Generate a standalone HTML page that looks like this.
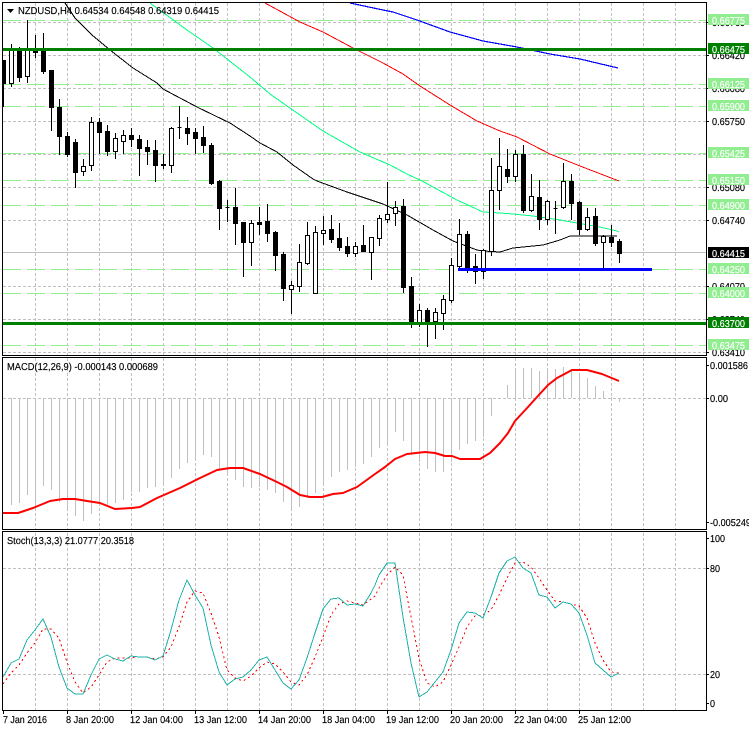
<!DOCTYPE html>
<html>
<head>
<meta charset="utf-8">
<title>NZDUSD,H4</title>
<style>
html,body{margin:0;padding:0;background:#fff;width:749px;height:731px;overflow:hidden}
svg{display:block}
text{font-family:"Liberation Sans",sans-serif;font-size:10px;fill:#000;stroke:#000;stroke-width:.15;text-rendering:geometricPrecision}
.w,.k{fill:#fff;stroke:#fff}
</style>
</head>
<body>
<svg xmlns="http://www.w3.org/2000/svg" width="749" height="731" viewBox="0 0 749 731">
<rect width="749" height="731" fill="#fff"/>

<!-- vertical grid -->
<path shape-rendering="crispEdges" fill="none" stroke="#c0c0c0" stroke-dasharray="3 2" d="M35.5 3V710M67.5 3V710M99.5 3V710M131.5 3V710M163.5 3V710M195.5 3V710M227.5 3V710M259.5 3V710M291.5 3V710M323.5 3V710M355.5 3V710M387.5 3V710M419.5 3V710M451.5 3V710M483.5 3V710M515.5 3V710M547.5 3V710M579.5 3V710M611.5 3V710M643.5 3V710M675.5 3V710"/>
<!-- horizontal grid -->
<path shape-rendering="crispEdges" fill="none" stroke="#c0c0c0" stroke-dasharray="3 2" d="M3 22.5H706M3 55.5H706M3 88.5H706M3 121.5H706M3 154.5H706M3 187.5H706M3 220.5H706M3 286.5H706M3 319.5H706M3 352.5H706M3 398.5H706M3 568.5H706M3 674.5H706"/>
<path shape-rendering="crispEdges" stroke="#c0c0c0" d="M3 252.5H706"/>
<!-- light green levels -->
<path shape-rendering="crispEdges" fill="none" stroke="#90ee90" stroke-dasharray="18 6" d="M3 20.5H706M3 84.5H706M3 106.5H706M3 153.5H706M3 180.5H706M3 205.5H706M3 269.5H706M3 293.5H706M3 345.5H706"/>

<!-- moving averages -->
<g fill="none" shape-rendering="crispEdges">
<polyline stroke="#000" points="65,3 75,18 92,35 110,50 133,68 157,83 163,89 197,107 230,123 250,136 260,143 277,152 293,165 313,179 317,181 347,192 383,204 407,215 433,230 453,241 477,250 483,251 500,252 513,248 533,246 543,245 560,240 570,236 617,236"/>
<polyline stroke="#00ff7f" points="150,3 187,30 213,48 250,77 270,94 287,106 323,131 360,152 390,165 407,174 422,181 457,200 483,212 500,213 513,214 533,216 560,220 577,223 600,227 617,231 619,232"/>
<polyline stroke="#ff0000" stroke-width="1" points="265,3 300,22 323,32 353,48 383,63 403,74 420,86 450,105 477,121 500,131 517,137 550,154 580,166 619,181"/>
<polyline stroke="#0000ff" stroke-width="1.2" points="350,3 383,10 393,12 417,20 450,32 483,41 500,44 517,47 550,54 580,59 618,68"/>
</g>

<!-- wicks -->
<path shape-rendering="crispEdges" fill="none" stroke="#000" d="M3.5 84V107M11.5 44V87M19.5 47V82M27.5 20V83M35.5 35V58M43.5 33V74M51.5 70V131M59.5 99V155M67.5 132V157M75.5 139V188M83.5 159V176M91.5 117V171M99.5 118V154M107.5 125V156M115.5 133V159M123.5 130V154M131.5 128V147M139.5 135V176M147.5 140V165M155.5 140V182M163.5 154V169M171.5 127V173M179.5 106V139M187.5 117V145M195.5 128V154M203.5 126V153M211.5 143V185M219.5 180V230M227.5 200V222M235.5 188V245M243.5 222V277M251.5 220V266M259.5 207V235M267.5 204V242M275.5 231V271M283.5 252V301M291.5 281V314M299.5 244V292M307.5 222V265M315.5 226V293M323.5 216V245M331.5 215V243M339.5 223V251M347.5 237V257M355.5 242V257M363.5 225V252M371.5 237V280M379.5 215V246M387.5 182V223M395.5 201V226M403.5 199V293M411.5 277V328M419.5 304V327M427.5 308V347M435.5 308V339M443.5 295V330M451.5 258V303M459.5 219V268M467.5 231V273M475.5 254V284M483.5 249V279M491.5 158V256M499.5 138V210M507.5 149V183M515.5 150V182M523.5 145V213M531.5 174V212M539.5 180V230M547.5 200V225M555.5 201V234M563.5 163V209M571.5 174V220M579.5 201V235M587.5 208V231M595.5 208V246M603.5 235V270M611.5 225V247M619.5 239V263"/>
<!-- left clipped candle -->
<rect x="3" y="60" width="3" height="24" fill="#000" shape-rendering="crispEdges"/>
<!-- black bodies -->
<path shape-rendering="crispEdges" fill="#000" stroke="#000" d="M17.5 50.5h4v27h-4zM33.5 48.5h4v4h-4zM41.5 51.5h4v20h-4zM49.5 70.5h4v37h-4zM57.5 107.5h4v29h-4zM65.5 136.5h4v18h-4zM73.5 142.5h4v30h-4zM97.5 122.5h4v10h-4zM105.5 131.5h4v20h-4zM129.5 135.5h4v4h-4zM137.5 139.5h4v9h-4zM145.5 147.5h4v4h-4zM153.5 150.5h4v15h-4zM161.5 164.5h4v1h-4zM177.5 127.5h4v0h-4zM185.5 128.5h4v5h-4zM193.5 132.5h4v6h-4zM201.5 137.5h4v8h-4zM209.5 145.5h4v38h-4zM217.5 181.5h4v27h-4zM225.5 207.5h4v0h-4zM233.5 207.5h4v16h-4zM241.5 222.5h4v20h-4zM257.5 222.5h4v2h-4zM265.5 221.5h4v12h-4zM273.5 232.5h4v23h-4zM281.5 254.5h4v34h-4zM329.5 229.5h4v10h-4zM337.5 238.5h4v9h-4zM345.5 246.5h4v7h-4zM361.5 245.5h4v6h-4zM401.5 206.5h4v81h-4zM409.5 286.5h4v37h-4zM425.5 310.5h4v11h-4zM465.5 234.5h4v33h-4zM473.5 266.5h4v5h-4zM505.5 169.5h4v7h-4zM521.5 154.5h4v56h-4zM537.5 197.5h4v22h-4zM553.5 208.5h4v0h-4zM569.5 181.5h4v22h-4zM577.5 202.5h4v27h-4zM593.5 216.5h4v27h-4zM609.5 237.5h4v5h-4zM617.5 241.5h4v12h-4z"/>
<!-- white bodies -->
<path shape-rendering="crispEdges" fill="#fff" stroke="#000" d="M9.5 50.5h4v33h-4zM25.5 49.5h4v27h-4zM81.5 166.5h4v5h-4zM89.5 122.5h4v43h-4zM113.5 138.5h4v13h-4zM121.5 135.5h4v6h-4zM169.5 128.5h4v37h-4zM249.5 223.5h4v19h-4zM289.5 285.5h4v4h-4zM297.5 262.5h4v24h-4zM305.5 235.5h4v28h-4zM313.5 232.5h4v61h-4zM321.5 230.5h4v3h-4zM353.5 246.5h4v7h-4zM369.5 237.5h4v15h-4zM377.5 218.5h4v20h-4zM385.5 214.5h4v5h-4zM393.5 207.5h4v6h-4zM417.5 310.5h4v13h-4zM433.5 312.5h4v9h-4zM441.5 299.5h4v14h-4zM449.5 265.5h4v35h-4zM457.5 234.5h4v32h-4zM481.5 250.5h4v21h-4zM489.5 190.5h4v61h-4zM497.5 166.5h4v24h-4zM513.5 154.5h4v22h-4zM529.5 196.5h4v14h-4zM545.5 201.5h4v18h-4zM561.5 181.5h4v26h-4zM585.5 217.5h4v12h-4zM601.5 236.5h4v6h-4z"/>

<!-- solid levels -->
<g shape-rendering="crispEdges">
<rect x="3" y="48" width="703" height="3" fill="#008000"/>
<rect x="3" y="322" width="703" height="3" fill="#008000"/>
<rect x="458" y="268" width="194" height="3" fill="#0000ff"/>
</g>

<!-- MACD histogram -->
<path shape-rendering="crispEdges" fill="none" stroke="#c0c0c0" d="M11.5 398V505M19.5 398V503M27.5 398V495M35.5 398V508M43.5 398V486M51.5 398V490M59.5 398V502M67.5 398V508M75.5 398V516M83.5 398V521M91.5 398V514M99.5 398V505M107.5 398V505M115.5 398V503M123.5 398V500M131.5 398V492M139.5 398V492M147.5 398V488M155.5 398V487M163.5 398V483M171.5 398V478M179.5 398V469M187.5 398V463M195.5 398V460M203.5 398V455M211.5 398V457M219.5 398V470M227.5 398V475M235.5 398V480M243.5 398V487M251.5 398V488M259.5 398V487M267.5 398V490M275.5 398V493M283.5 398V502M291.5 398V508M299.5 398V507M307.5 398V498M315.5 398V493M323.5 398V485M331.5 398V477M339.5 398V472M347.5 398V470M355.5 398V467M363.5 398V464M371.5 398V457M379.5 398V448M387.5 398V443M395.5 398V432M403.5 398V441M411.5 398V455M419.5 398V462M427.5 398V469M435.5 398V472M443.5 398V472M451.5 398V462M459.5 398V450M467.5 398V444M475.5 398V441M483.5 398V437M491.5 398V416M507.5 398V385M515.5 398V368M523.5 398V368M531.5 398V368M539.5 398V371M547.5 398V368M555.5 398V369M563.5 398V367M571.5 398V369M579.5 398V374M587.5 398V378M595.5 398V386M603.5 398V391M611.5 398V397M619.5 398V402"/>
<!-- MACD line -->
<polyline fill="none" stroke="#ff0000" stroke-width="2" stroke-linejoin="round" points="3,513 18,513 33,508 50,501 63,499 75,499 87,501 100,503 115,509 132,508 140,507 157,498 180,488 200,478 217,470 230,468 243,468 260,474 277,482 287,487 300,495 310,497 322,497 333,494 343,493 357,487 375,474 385,467 395,459 407,454 425,452 435,453 445,456 452,456 460,459 480,459 490,453 500,443 508,433 515,421 528,407 537,397 548,385 557,378 572,370 587,370 602,374 619,381"/>

<!-- Stochastic -->
<polyline shape-rendering="crispEdges" fill="none" stroke="#ff0000" stroke-dasharray="2 3" points="3,684 11,673 19,665 27,653 35,643 43,629 51,629 59,638 67,662 75,682 83,693 91,687 99,675 107,662 115,658 123,658 131,658 139,657 147,657 155,659 163,657 171,647 179,627 187,602 195,591 203,593 211,613 219,637 227,670 235,678 243,681 251,676 259,668 267,662 275,664 283,672 291,682 299,685 307,675 315,657 323,637 331,615 339,604 347,601 355,603 363,605 371,599 375,596 379,588 387,575 395,567 403,575 411,617 419,658 427,683 435,687 443,682 451,665 459,647 467,627 475,616 483,615 491,610 499,595 507,578 515,563 523,562 531,567 539,578 547,590 555,601 563,602 571,604 579,606 587,618 595,643 603,660 611,672 619,673"/>
<polyline shape-rendering="crispEdges" fill="none" stroke="#20b2aa" points="3,677 11,663 19,659 27,640 35,630 43,619 51,637 59,667 67,688 75,694 83,694 91,675 99,659 107,655 115,659 123,661 131,656 139,657 147,657 155,660 163,656 171,630 179,600 187,580 195,595 203,608 211,645 219,672 227,685 235,679 243,677 251,670 259,660 267,657 275,670 283,683 291,689 299,680 307,658 315,633 323,609 331,599 339,598 347,605 355,604 363,606 371,593 375,585 379,575 387,563 395,563 403,617 411,663 419,697 427,692 435,682 443,672 451,650 459,623 467,612 475,613 483,618 491,597 499,573 507,561 515,557 523,568 531,573 539,595 547,597 555,608 563,602 571,604 579,613 587,635 595,663 603,670 611,677 619,673"/>

<!-- frames -->
<path shape-rendering="crispEdges" fill="none" stroke="#000" d="M2.5 2.5H706.5V710.5H2.5ZM2.5 355.5H706.5M2.5 357.5H706.5M2.5 529.5H706.5M2.5 531.5H706.5"/>
<rect x="0" y="356" width="749" height="1" fill="#fff" shape-rendering="crispEdges"/>
<rect x="0" y="530" width="749" height="1" fill="#fff" shape-rendering="crispEdges"/>
<!-- ticks -->
<path shape-rendering="crispEdges" fill="none" stroke="#000" d="M706 22.5h3M706 55.5h3M706 88.5h3M706 121.5h3M706 187.5h3M706 220.5h3M706 286.5h3M706 319.5h3M706 352.5h3M706 365.5h3M706 398.5h3M706 522.5h3M706 538.5h3M706 568.5h3M706 674.5h3M706 703.5h3M3.5 710v4M67.5 710v4M131.5 710v4M195.5 710v4M259.5 710v4M323.5 710v4M387.5 710v4M451.5 710v4M515.5 710v4M579.5 710v4"/>

<!-- header -->
<path d="M7 9h7l-3.5 4z" fill="#000"/>
<text x="18" y="14" textLength="201" lengthAdjust="spacingAndGlyphs">NZDUSD,H4  0.64534 0.64548 0.64319 0.64415</text>
<text x="7" y="370" textLength="151" lengthAdjust="spacingAndGlyphs">MACD(12,26,9) -0.000143 0.000689</text>
<text x="7" y="544" textLength="127" lengthAdjust="spacingAndGlyphs">Stoch(13,3,3) 21.0777 20.3518</text>

<!-- price axis text -->
<text x="712" y="26" textLength="33" lengthAdjust="spacingAndGlyphs">0.66760</text>
<text x="712" y="59" textLength="33" lengthAdjust="spacingAndGlyphs">0.66420</text>
<text x="712" y="92" textLength="33" lengthAdjust="spacingAndGlyphs">0.66080</text>
<text x="712" y="125" textLength="33" lengthAdjust="spacingAndGlyphs">0.65750</text>
<text x="712" y="191" textLength="33" lengthAdjust="spacingAndGlyphs">0.65080</text>
<text x="712" y="224" textLength="33" lengthAdjust="spacingAndGlyphs">0.64740</text>
<text x="712" y="290" textLength="33" lengthAdjust="spacingAndGlyphs">0.64070</text>
<text x="712" y="323" textLength="33" lengthAdjust="spacingAndGlyphs">0.63740</text>
<text x="712" y="356" textLength="33" lengthAdjust="spacingAndGlyphs">0.63410</text>

<!-- level boxes -->
<g shape-rendering="crispEdges">
<rect x="708" y="14" width="41" height="11" fill="#90ee90"/>
<rect x="708" y="43" width="41" height="11" fill="#008000"/>
<rect x="708" y="78" width="41" height="11" fill="#90ee90"/>
<rect x="708" y="100" width="41" height="11" fill="#90ee90"/>
<rect x="708" y="147" width="41" height="11" fill="#90ee90"/>
<rect x="708" y="174" width="41" height="11" fill="#90ee90"/>
<rect x="708" y="199" width="41" height="11" fill="#90ee90"/>
<rect x="708" y="247" width="41" height="11" fill="#000"/>
<rect x="708" y="263" width="41" height="11" fill="#90ee90"/>
<rect x="708" y="287" width="41" height="11" fill="#90ee90"/>
<rect x="708" y="317" width="41" height="11" fill="#008000"/>
<rect x="708" y="339" width="41" height="11" fill="#90ee90"/>
</g>
<text class="w" x="712" y="24" textLength="33" lengthAdjust="spacingAndGlyphs">0.66775</text>
<text class="w" x="712" y="53" textLength="33" lengthAdjust="spacingAndGlyphs">0.66475</text>
<text class="w" x="712" y="88" textLength="33" lengthAdjust="spacingAndGlyphs">0.66125</text>
<text class="w" x="712" y="110" textLength="33" lengthAdjust="spacingAndGlyphs">0.65900</text>
<text class="w" x="712" y="157" textLength="33" lengthAdjust="spacingAndGlyphs">0.65425</text>
<text class="w" x="712" y="184" textLength="33" lengthAdjust="spacingAndGlyphs">0.65150</text>
<text class="w" x="712" y="209" textLength="33" lengthAdjust="spacingAndGlyphs">0.64900</text>
<text class="k" x="712" y="257" textLength="33" lengthAdjust="spacingAndGlyphs">0.64415</text>
<text class="w" x="712" y="273" textLength="33" lengthAdjust="spacingAndGlyphs">0.64250</text>
<text class="w" x="712" y="297" textLength="33" lengthAdjust="spacingAndGlyphs">0.64000</text>
<text class="w" x="712" y="327" textLength="33" lengthAdjust="spacingAndGlyphs">0.63700</text>
<text class="w" x="712" y="349" textLength="33" lengthAdjust="spacingAndGlyphs">0.63475</text>

<!-- MACD axis -->
<text x="710" y="369" textLength="38" lengthAdjust="spacingAndGlyphs">0.001586</text>
<text x="710" y="402" textLength="18" lengthAdjust="spacingAndGlyphs">0.00</text>
<text x="710" y="526" textLength="41" lengthAdjust="spacingAndGlyphs">-0.005249</text>
<!-- Stoch axis -->
<text x="710" y="542" textLength="15" lengthAdjust="spacingAndGlyphs">100</text>
<text x="710" y="572" textLength="10" lengthAdjust="spacingAndGlyphs">80</text>
<text x="710" y="678" textLength="10" lengthAdjust="spacingAndGlyphs">20</text>
<text x="710" y="707" textLength="5" lengthAdjust="spacingAndGlyphs">0</text>

<!-- time axis -->
<text x="3" y="723" textLength="44" lengthAdjust="spacingAndGlyphs">7 Jan 2016</text>
<text x="66" y="723" textLength="48" lengthAdjust="spacingAndGlyphs">8 Jan 20:00</text>
<text x="130" y="723" textLength="53" lengthAdjust="spacingAndGlyphs">12 Jan 04:00</text>
<text x="194" y="723" textLength="53" lengthAdjust="spacingAndGlyphs">13 Jan 12:00</text>
<text x="258" y="723" textLength="53" lengthAdjust="spacingAndGlyphs">14 Jan 20:00</text>
<text x="322" y="723" textLength="53" lengthAdjust="spacingAndGlyphs">18 Jan 04:00</text>
<text x="386" y="723" textLength="53" lengthAdjust="spacingAndGlyphs">19 Jan 12:00</text>
<text x="450" y="723" textLength="53" lengthAdjust="spacingAndGlyphs">20 Jan 20:00</text>
<text x="514" y="723" textLength="53" lengthAdjust="spacingAndGlyphs">22 Jan 04:00</text>
<text x="578" y="723" textLength="53" lengthAdjust="spacingAndGlyphs">25 Jan 12:00</text>
</svg>
</body>
</html>
